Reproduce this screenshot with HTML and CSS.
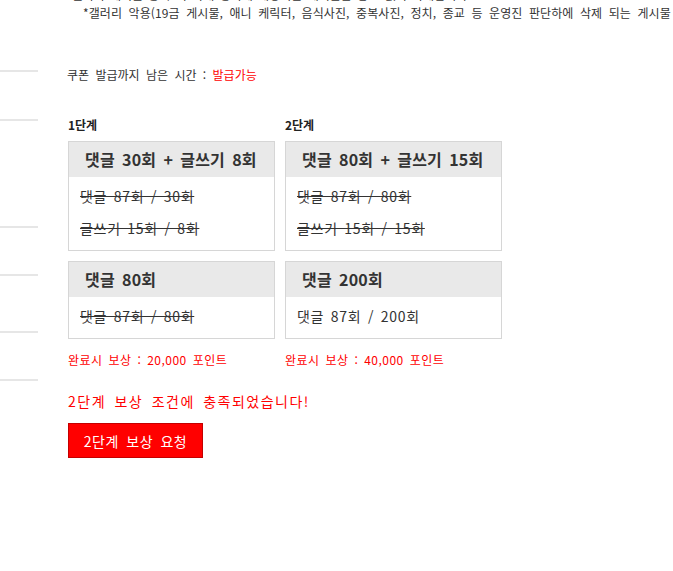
FILE: index.html
```html
<!DOCTYPE html>
<html lang="ko">
<head>
<meta charset="utf-8">
<title>쿠폰 발급</title>
<link rel="stylesheet" href="styles.css">
</head>
<body>
<div class="notice">
  <p class="notice-cut">ㆍ 갤러리 게시물 등록 시 아래 항목에 해당되는 게시물은 통보 없이 삭제됩니다</p>
  <p class="notice-line">*갤러리 악용(19금 게시물, 애니 케릭터, 음식사진, 중복사진, 정치, 종교 등 운영진 판단하에 삭제 되는 게시물</p>
</div>
<div class="layout">
  <div class="sidebar">
    <div class="side-item s1"></div>
    <div class="side-item s2"></div>
    <div class="side-item s3"></div>
    <div class="side-item s4"></div>
    <div class="side-item s5"></div>
    <div class="side-item s6"></div>
  </div>
  <div class="main">
    <p class="coupon">쿠폰 발급까지 남은 시간 : <span class="red">발급가능</span></p>
    <div class="stages">
      <div class="stage">
        <div class="stage-title">1단계</div>
        <div class="box">
          <div class="box-head">댓글 30회 + 글쓰기 8회</div>
          <div class="box-body">
            <div class="item done">댓글 87회 / 30회</div>
            <div class="item done">글쓰기 15회 / 8회</div>
          </div>
        </div>
        <div class="box">
          <div class="box-head">댓글 80회</div>
          <div class="box-body">
            <div class="item done">댓글 87회 / 80회</div>
          </div>
        </div>
        <div class="reward">완료시 보상 : 20,000 포인트</div>
      </div>
      <div class="stage">
        <div class="stage-title">2단계</div>
        <div class="box">
          <div class="box-head">댓글 80회 + 글쓰기 15회</div>
          <div class="box-body">
            <div class="item done">댓글 87회 / 80회</div>
            <div class="item done">글쓰기 15회 / 15회</div>
          </div>
        </div>
        <div class="box">
          <div class="box-head">댓글 200회</div>
          <div class="box-body">
            <div class="item">댓글 87회 / 200회</div>
          </div>
        </div>
        <div class="reward">완료시 보상 : 40,000 포인트</div>
      </div>
    </div>
    <p class="message">2단계 보상 조건에 충족되었습니다!</p>
    <button class="btn" type="button">2단계 보상 요청</button>
  </div>
</div>
</body>
</html>
```
FILE: styles.css
```css
html, body {
  margin: 0;
  padding: 0;
  background: #fff;
  overflow: hidden;
}
body {
  font-family: "Noto Sans CJK KR", "Noto Sans", sans-serif;
  color: #333;
  font-size: 12px;
  width: 673px;
  height: 571px;
}
p { margin: 0; }

.notice {
  white-space: nowrap;
}
.notice-cut {
  margin-top: -13px;
  padding-left: 55px;
  line-height: 16px;
  height: 16px;
  word-spacing: 2px;
}
.notice-line {
  padding-left: 83px;
  line-height: 16px;
  height: 16px;
  margin-top: 2px;
  word-spacing: 3px;
  letter-spacing: 0.1px;
}

.layout {
  display: flex;
  margin-top: 9px;
}
.sidebar {
  width: 38px;
  flex: none;
  display: flex;
  flex-direction: column;
}
.side-item {
  border-bottom: 2px solid #e6e6e6;
}
.s1 { height: 40px; }
.s2 { height: 47px; }
.s3 { height: 105px; }
.s4 { height: 46px; }
.s5 { height: 55px; }
.s6 { height: 46px; }

.main {
  padding-left: 30px;
}
.coupon {
  margin-top: 37px;
  margin-left: -1px;
  line-height: 16px;
  word-spacing: 3px;
}
.red { color: #ff0000; }

.stages {
  display: grid;
  grid-template-columns: 207px 217px;
  column-gap: 10px;
  margin-top: 34px;
}
.stage {
  display: flex;
  flex-direction: column;
}
.stage-title {
  font-weight: 700;
  line-height: 16px;
  margin-bottom: 8px;
  color: #222;
}
.box {
  border: 1px solid #d6d6d6;
  margin-bottom: 10px;
}
.box-head {
  background: #e9e9e9;
  height: 35px;
  line-height: 35px;
  padding-left: 16px;
  font-size: 16px;
  font-weight: 700;
  color: #333;
  white-space: nowrap;
  word-spacing: 2.5px;
  letter-spacing: 0.2px;
}
.box-body {
  padding: 3px 11px 6px;
}
.item {
  font-size: 14px;
  line-height: 32px;
  color: #333;
  white-space: nowrap;
  word-spacing: 2px;
  letter-spacing: 0.7px;
}
.item.done {
  text-decoration: line-through;
}
.reward {
  color: #ff0000;
  line-height: 16px;
  margin-top: 3px;
  word-spacing: 2px;
  letter-spacing: 0.5px;
}

.message {
  color: #ff0000;
  font-size: 14px;
  line-height: 20px;
  margin-top: 23px;
  word-spacing: 3px;
  letter-spacing: 1.5px;
}
.btn {
  display: block;
  margin-top: 12px;
  width: 135px;
  height: 35px;
  background: #ff0000;
  border: 1px solid #c40000;
  color: #fff;
  font-family: "Noto Sans CJK KR", "Noto Sans", sans-serif;
  font-size: 14px;
  padding: 0;
  word-spacing: 3px;
  letter-spacing: 0.5px;
}
```
